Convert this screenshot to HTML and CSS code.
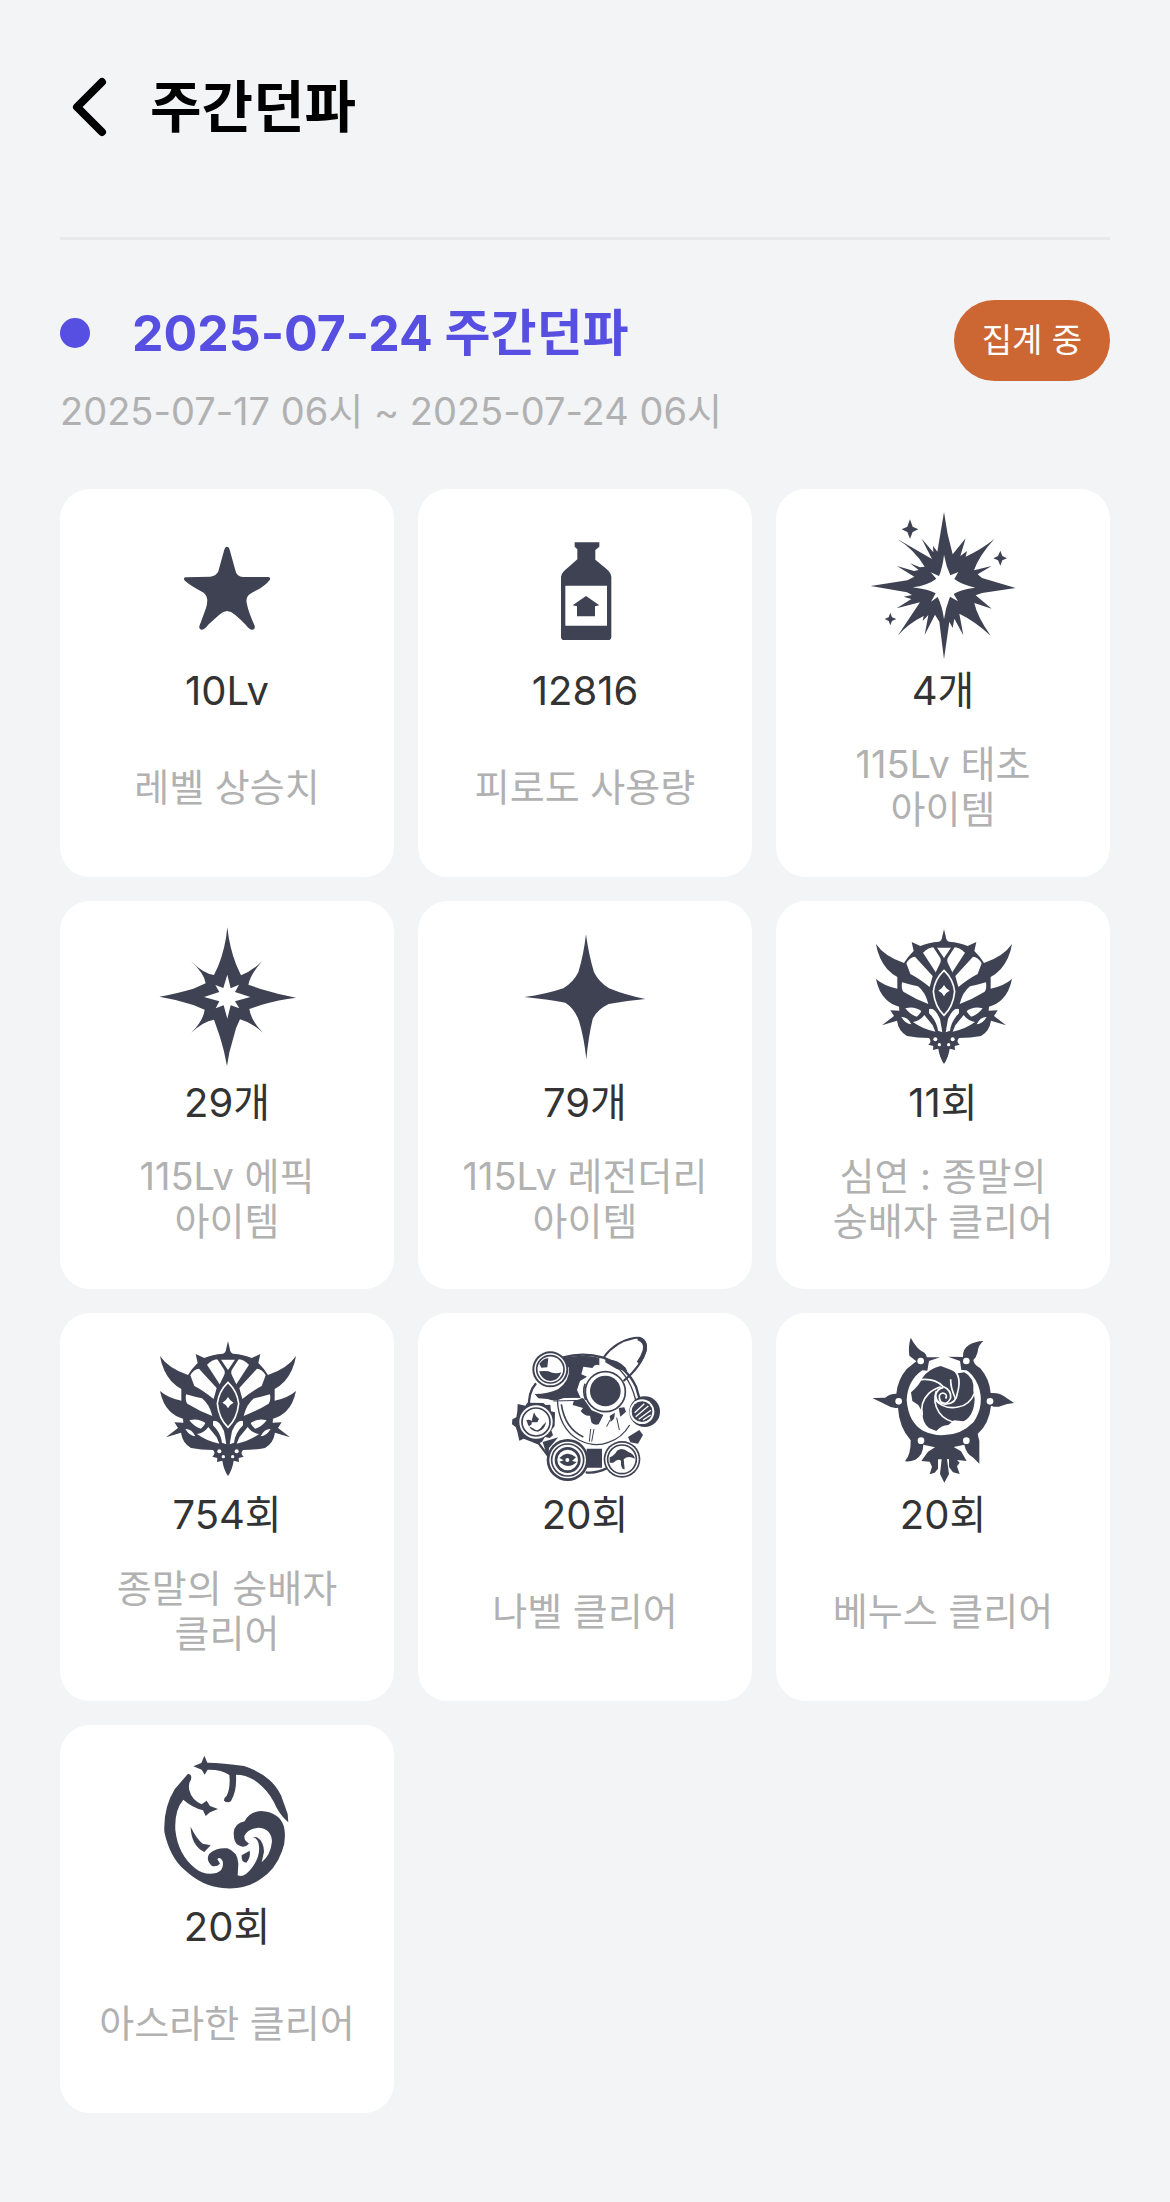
FILE: index.html
```html
<!DOCTYPE html>
<html lang="ko">
<head>
<meta charset="utf-8">
<meta name="viewport" content="width=device-width, initial-scale=1">
<title>주간던파</title>
<link rel="stylesheet" href="styles.css">
</head>
<body>
<svg class="defs" aria-hidden="true">
  <symbol id="emblem" viewBox="24 9 450 450">
    <!-- right half is a mirror of the left half about x=252 -->
    <g id="emblem-half">
      <path fill="currentColor" d="M252 28L247 48Q246 62 237 65Q205 67 181 78L155 66L161 93Q145 108 132 129Q73 109 48 72Q55 116 82 148Q96 163 112 171L112 206Q72 198 48 177Q56 216 77 237Q92 253 117 260L118 272L91 271L102 288L66 316L111 302Q116 334 141 348Q171 354 207 354Q217 365 205 374L220 378L219 390L235 386Q239 413 252 432Z"/>
      <g fill="#fff">
        <path d="M189 98Q209 80 225 82L242 108L242 125L228 158Z"/>
        <path d="M139 130Q150 110 165 110L218 168L209 201Q178 176 151 162Z"/>
        <path d="M126 187Q153 195 174 199Q196 216 205 252Q166 237 130 215Q123 207 126 187Z"/>
        <path d="M136 265Q162 257 184 273L176 292Q151 286 136 265Z"/>
        <path d="M124 291Q143 290 154 313Q137 313 124 291Z"/>
        <path d="M193 285L218 316L226 335Q187 327 159 306Q180 303 193 285Z"/>
        <path d="M207 268Q223 260 240 297L247 337L234 332Q230 302 207 280Z"/>
        <path d="M231 83H252V114Z"/>
        <circle cx="226" cy="358" r="6"/>
        <circle cx="238" cy="374" r="5"/>
      </g>
      <path fill="none" stroke="currentColor" stroke-width="7" d="M168 105L222 165M222 78L252 125M207 256L172 294M252 285V350"/>
    </g>
    <use href="#emblem-half" transform="translate(504 0) scale(-1 1)"/>
    <path fill="currentColor" d="M252 116Q212 168 212 215Q217 266 252 299Q287 266 292 215Q292 168 252 116Z"/>
    <path fill="none" stroke="#fff" stroke-width="5" d="M252 151Q224 178 220 215Q225 261 252 286Q279 261 284 215Q280 178 252 151Z"/>
    <path fill="#fff" d="M252 195Q257 206 269 212Q257 217 252 229Q247 217 235 212Q247 206 252 195Z"/>
  </symbol>
</svg>

<main class="page">
  <header class="topbar">
    <button class="back" type="button" aria-label="뒤로">
      <svg viewBox="0 0 60 60" aria-hidden="true"><path d="M42 5L17 30L42 55" fill="none" stroke="currentColor" stroke-width="8" stroke-linecap="round" stroke-linejoin="round"/></svg>
    </button>
    <h1>주간던파</h1>
  </header>

  <section class="week">
    <div class="week-head">
      <div class="week-info">
        <h2>2025-07-24 주간던파</h2>
        <p class="period">2025-07-17 06시 ~ 2025-07-24 06시</p>
      </div>
      <span class="badge">집계 중</span>
    </div>

    <ul class="cards">
      <li class="card">
        <svg class="icon" viewBox="-24 33 450 450" aria-hidden="true"><path fill="currentColor" d="M201 140Q207 140 209 149L226 211Q230 231 249 231H325Q333 232 329 240Q316 257 293 269L276 278Q256 288 260 308Q265 336 284 377Q286 389 277 389Q268 389 257 374Q242 358 225 344Q201 322 178 344L146 373Q134 389 126 389Q117 388 118 379L137 327Q149 293 131 278Q91 258 73 241Q70 232 77 232L151 230Q169 229 175 214L192 152Q195 140 201 140Z"/></svg>
        <p class="value">10Lv</p>
        <p class="label">레벨 상승치</p>
      </li>
      <li class="card">
        <svg class="icon" viewBox="1050 33 450 450" aria-hidden="true"><path fill="currentColor" fill-rule="evenodd" d="M1244 127H1318V140L1306 150V179L1337 205Q1354 219 1354 232V410Q1354 420 1344 420H1213Q1203 420 1203 410V230Q1204 218 1225 202L1252 178V148L1244 140ZM1216 257V377H1341V257ZM1278 288L1318 316L1305 319V349H1251V319L1238 316Z"/></svg>
        <p class="value">12816</p>
        <p class="label">피로도 사용량</p>
      </li>
      <li class="card">
        <svg class="icon" viewBox="24 33 450 450" aria-hidden="true">
          <path fill="currentColor" d="M252 36L263 103L278 163L317 115L301 168L321 153L317 170Q365 148 403 117Q357 167 342 211L395 198L353 223L366 234L467 264L366 279L347 286L395 326L343 309Q351 349 392 407Q344 363 298 341L310 406L283 356L278 384L268 365L252 478L238 365L225 344L194 405L205 345L188 363L191 348Q146 370 113 407L180 307L110 325L154 297L131 290L156 285L141 277L32 258L142 241L163 230L111 198L162 213L176 210L150 190L180 202L194 200Q163 149 112 117L195 165L216 177L185 116L220 157L219 137L232 155Z"/>
          <path fill="#fff" d="M252 164Q258 198 271 226L295 216L283 237Q303 253 346 263Q301 268 281 282L294 304L270 290Q257 322 252 358Q247 319 233 291L213 305L227 280Q207 268 158 262Q203 256 229 236L212 217L237 228Q248 202 252 164Z"/>
          <path fill="currentColor" d="M150 58L158 80L175 88L158 96L150 116L142 96L125 88L142 80ZM421 152L427 168L441 175L427 181L421 197L414 181L400 175L414 168ZM91 338L96 352L109 357L96 363L91 376L86 363L74 357L86 352Z"/>
        </svg>
        <p class="value">4개</p>
        <p class="label">115Lv 태초<br>아이템</p>
      </li>
      <li class="card">
        <svg class="icon" viewBox="36 9 450 450" aria-hidden="true"><path fill="currentColor" fill-rule="evenodd" d="M262 22Q269 86 289 135L303 166Q334 155 367 123Q332 162 325 194L362 207Q417 224 468 233Q417 239 363 255L328 267Q333 302 369 338Q334 307 300 298Q286 324 280 354Q267 393 261 438Q253 392 240 351L222 299Q188 305 154 338Q190 302 194 269L160 255Q109 238 58 230Q105 222 160 206L197 190Q194 162 153 123Q190 161 222 165L235 137Q256 86 262 22ZM262 164L250 204L226 195L238 216L192 231L238 244L227 265L251 256L262 296L272 256L298 265L285 244L331 231L285 216L297 194L272 205Z"/></svg>
        <p class="value">29개</p>
        <p class="label">115Lv 에픽<br>아이템</p>
      </li>
      <li class="card">
        <svg class="icon" viewBox="0 9 450 450" aria-hidden="true"><path fill="currentColor" d="M228 43Q236 104 252 157Q268 188 297 205Q348 226 406 237Q350 242 296 252Q261 269 248 297Q235 352 229 418Q222 351 207 303Q195 267 166 248Q111 238 43 231Q108 223 160 205Q190 187 205 157Q221 104 228 43Z"/></svg>
        <p class="value">79개</p>
        <p class="label">115Lv 레전더리<br>아이템</p>
      </li>
      <li class="card">
        <svg class="icon" viewBox="0 0 150 150" aria-hidden="true"><use href="#emblem" width="150" height="150"/></svg>
        <p class="value">11회</p>
        <p class="label">심연 : 종말의<br>숭배자 클리어</p>
      </li>
      <li class="card">
        <svg class="icon" viewBox="0 0 150 150" aria-hidden="true"><use href="#emblem" width="150" height="150"/></svg>
        <p class="value">754회</p>
        <p class="label">종말의 숭배자<br>클리어</p>
      </li>
      <li class="card">
        <svg class="icon" viewBox="30 30 450 450" aria-hidden="true">
          <g fill="none" stroke="currentColor">
            <path stroke-width="7" d="M190 97Q250 80 310 98Q380 125 408 185L421 230"/>
            <path stroke-width="4" d="M320 105Q386 140 407 225M172 221Q175 310 237 345Q285 369 325 352Q365 340 389 300"/>
            <path stroke-width="5" d="M184 238Q195 310 250 336"/>
            <path stroke-width="7" d="M108 175Q82 205 88 252M112 350L150 400M257 442Q290 446 320 430"/>
            <path stroke-width="6" d="M312 96Q345 50 403 39Q439 35 438 72Q425 125 368 170"/>
            <path stroke-width="12" d="M414 40Q440 48 434 77Q428 97 415 114"/>
            <path stroke-width="3" d="M160 219L240 216M160 228L245 226M272 312L268 350M282 312L275 350M350 278L358 315M330 285L320 305"/>
          </g>
          <g fill="currentColor">
            <path d="M185 100Q240 86 298 98V121Q285 116 277 129L250 125L244 148L261 155L240 168L231 195L243 221L221 229L218 240L249 249L242 258Q255 275 270 272L274 292Q280 302 296 298L310 270L275 256L250 220Q210 216 190 219Q165 232 143 222L115 220L104 207Q145 207 174 193Q210 167 207 129Z"/>
            <path d="M316 104Q350 100 377 128L382 139L350 132L316 112ZM329 273L345 263L342 281L332 291ZM356 249L373 247L378 260L361 275ZM260 371H306V428H260ZM384 336L418 315L429 330L414 356L391 352ZM128 351L175 337L147 369L145 405Z"/>
            <circle cx="434" cy="260" r="46"/>
            <path d="M53 237L76 242L82 233L130 234L137 240L151 239L153 259L165 262L164 303L154 316L159 331L149 339L135 336L126 350L112 358L98 352L71 341L58 347L52 320L47 306L36 298L37 283L49 277L52 259Z"/>
            <circle cx="151" cy="133" r="54"/><circle cx="203" cy="405" r="63"/><circle cx="366" cy="403" r="55"/>
          </g>
          <g fill="#fff"><circle cx="316" cy="200" r="63"/><circle cx="151" cy="133" r="48"/><circle cx="203" cy="405" r="55"/><circle cx="366" cy="403" r="50"/><circle cx="108" cy="291" r="50"/><circle cx="426" cy="260" r="37"/></g>
          <g fill="none" stroke="currentColor" stroke-width="5"><circle cx="316" cy="200" r="60"/><path d="M255 176Q247 200 257 225"/><circle cx="151" cy="133" r="41"/><circle cx="203" cy="405" r="48"/><circle cx="203" cy="405" r="35" stroke-width="8"/><circle cx="366" cy="403" r="43"/><circle cx="108" cy="291" r="42"/></g>
          <circle cx="316" cy="198" r="46" fill="currentColor"/>
          <g fill="currentColor"><path d="M117 139Q138 137 145 139Q165 149 184 142Q175 167 151 168Q126 167 117 139ZM118 116Q132 99 145 100L142 127L124 128Z"/>
            <path d="M102 262Q105 273 117 282L112 292L94 291ZM79 285Q98 280 95 298L87 304L99 310Q113 324 127 302L138 291Q136 313 114 320Q88 320 79 285Z"/>
            <path fill-rule="evenodd" d="M178 399Q203 374 228 397L216 408L230 411Q205 435 178 410L191 406ZM202 399A6 6 0 1 0 202 411A6 6 0 1 0 202 399Z"/>
            <path d="M329 397Q345 390 351 377Q367 366 385 381Q401 386 405 401Q384 390 371 403L374 433Q362 434 363 407Q354 399 340 413H329Z"/>
            <circle cx="426" cy="260" r="31"/></g>
          <path fill="none" stroke="#fff" stroke-width="4" d="M404 263L433 236M407 275L445 243M416 283L453 256M429 285L452 270M150 96Q146 124 180 136"/>
        </svg>
        <p class="value">20회</p>
        <p class="label">나벨 클리어</p>
      </li>
      <li class="card">
        <svg class="icon" viewBox="24 30 450 450" aria-hidden="true">
          <path fill="currentColor" d="M152 38Q170 71 188 80Q200 86 200 97L240 97L207 108L202 137L187 136Q143 166 140 225Q145 292 189 317Q223 333 253 330Q303 330 341 291Q376 238 354 180Q338 145 319 136L304 135L300 108L264 95L309 96Q307 72 327 60Q345 49 370 48Q354 61 353 81Q349 97 340 105Q341 119 361 130Q389 163 392 204Q416 202 431 213L462 234Q440 236 425 242Q410 249 393 242Q388 295 353 327L358 348V416L340 398Q318 386 313 359L281 366L303 379L320 408L291 405L299 413L291 424L299 447L279 442L267 426V402L261 403L267 447L253 473L240 447L245 403L234 403V431L224 443L209 448L216 425L209 410L184 408L204 380L225 367L190 359Q190 389 166 404Q151 411 135 409Q153 388 152 346Q117 306 114 248Q96 251 80 240L37 219L76 218Q88 206 109 206Q113 164 140 132L169 109L148 92Q144 65 152 38Z"/>
          <path fill="currentColor" d="M153 202Q180 179 187 159Q206 131 242 123L268 133L294 145L313 142Q344 158 340 198L344 222Q342 274 310 289L282 286L265 300Q244 300 229 318L207 309Q186 292 188 263L175 240L157 228Z"/>
          <g fill="none" stroke="#fff" stroke-width="5"><path d="M170 166Q222 156 248 184Q275 195 272 219Q260 244 242 230Q231 208 248 204Q264 207 257 221"/><path d="M279 132Q307 155 292 205Q289 234 260 237Q229 239 227 212Q231 190 250 188"/><path d="M344 204Q328 242 294 246Q255 255 225 225"/><path d="M300 296Q254 288 237 262Q217 230 229 198"/><path d="M187 270Q179 233 206 206Q218 193 242 185"/><path d="M272 163Q271 187 286 220"/></g>
          <g fill="#fff"><circle cx="182" cy="108" r="10"/><circle cx="319" cy="108" r="10"/><circle cx="116" cy="229" r="10"/><circle cx="390" cy="229" r="10"/><circle cx="183" cy="347" r="10"/><circle cx="319" cy="347" r="10"/></g>
        </svg>
        <p class="value">20회</p>
        <p class="label">베누스 클리어</p>
      </li>
      <li class="card">
        <svg class="icon" viewBox="6 21 450 450" aria-hidden="true"><g fill="currentColor">
          <path d="M163 47L172 68Q220 69 282 78Q363 104 393 166L413 222L415 247Q395 231 379 202Q364 166 338 141Q301 104 258 104Q261 154 243 183Q233 191 222 182Q221 174 230 167Q242 144 238 105Q214 88 173 89L164 104L155 89L130 79L154 69Z"/>
          <path d="M114 101Q128 103 122 121Q114 132 118 151Q125 180 155 193L170 182L180 198L204 207L180 217L167 228L159 211Q124 201 100 179Q73 210 76 270Q84 345 137 386Q164 407 199 399Q223 390 218 364Q211 349 202 357L210 371Q199 382 185 377Q166 359 178 341Q200 322 232 325Q263 335 265 371L263 406Q282 416 307 382Q333 345 326 312Q323 295 307 291L321 292Q341 304 342 335L335 367Q362 346 366 304Q364 265 324 263Q291 269 283 288Q282 302 297 311Q283 326 266 316Q251 309 251 279Q253 250 284 244Q297 216 333 213Q388 216 402 260Q410 299 396 334Q376 390 331 418Q282 451 217 444Q158 440 105 391Q59 352 43 275Q40 203 74 148Z"/>
          <path d="M122 260Q138 294 158 311L182 316L163 336Q123 316 122 260ZM275 346L299 332Q303 351 289 368Q273 368 275 346Z"/>
        </g></svg>
        <p class="value">20회</p>
        <p class="label">아스라한 클리어</p>
      </li>
    </ul>
  </section>
</main>
</body>
</html>
```
FILE: styles.css
```css
* {
  box-sizing: border-box;
}

body,
h1,
h2,
p,
ul {
  margin: 0;
  padding: 0;
}

body {
  background: #f2f4f6;
  color: #333;
  font-family: Inter, "Noto Sans CJK KR", sans-serif;
  word-break: keep-all;
}

.defs {
  display: none;
}

.page {
  padding: 0 60px 88px;
}

.topbar {
  display: flex;
  align-items: center;
  gap: 30px;
  height: 240px;
  padding-bottom: 24px;
  border-bottom: 3px solid #e8e9eb;
  color: #000;
}

.back {
  display: flex;
  width: 60px;
  height: 60px;
  padding: 0;
  border: 0;
  background: none;
  color: inherit;
}

.back svg {
  width: 100%;
  height: 100%;
}

h1 {
  font-size: 56px;
  line-height: 74px;
  font-weight: 700;
}

.week {
  padding-top: 60px;
}

.week-head {
  display: flex;
  justify-content: space-between;
  align-items: flex-start;
  margin-bottom: 48px;
}

h2 {
  display: flex;
  align-items: center;
  gap: 42px;
  color: #574ee2;
  font-size: 50px;
  line-height: 66px;
  font-weight: 700;
}

h2::before {
  content: "";
  width: 30px;
  height: 30px;
  border-radius: 50%;
  background: currentColor;
}

.period {
  margin-top: 15px;
  color: #b1b1b1;
  font-size: 38px;
  line-height: 60px;
}

.badge {
  padding: 15px 28px;
  border-radius: 41px;
  background: #cc6633;
  color: #fff;
  font-size: 33px;
  line-height: 51px;
}

.cards {
  display: grid;
  grid-template-columns: repeat(3, 1fr);
  gap: 24px;
  list-style: none;
}

.card {
  display: flex;
  flex-direction: column;
  align-items: center;
  min-height: 388px;
  padding: 22px 16px 30px;
  border-radius: 30px;
  background: #fff;
  text-align: center;
}

.icon {
  width: 150px;
  height: 150px;
  color: #3e4252;
}

.value {
  font-size: 40px;
  line-height: 60px;
}

.label {
  display: flex;
  flex: 1;
  align-items: center;
  padding-top: 6px;
  color: #b1b1b1;
  font-size: 38px;
  line-height: 45px;
}
```
